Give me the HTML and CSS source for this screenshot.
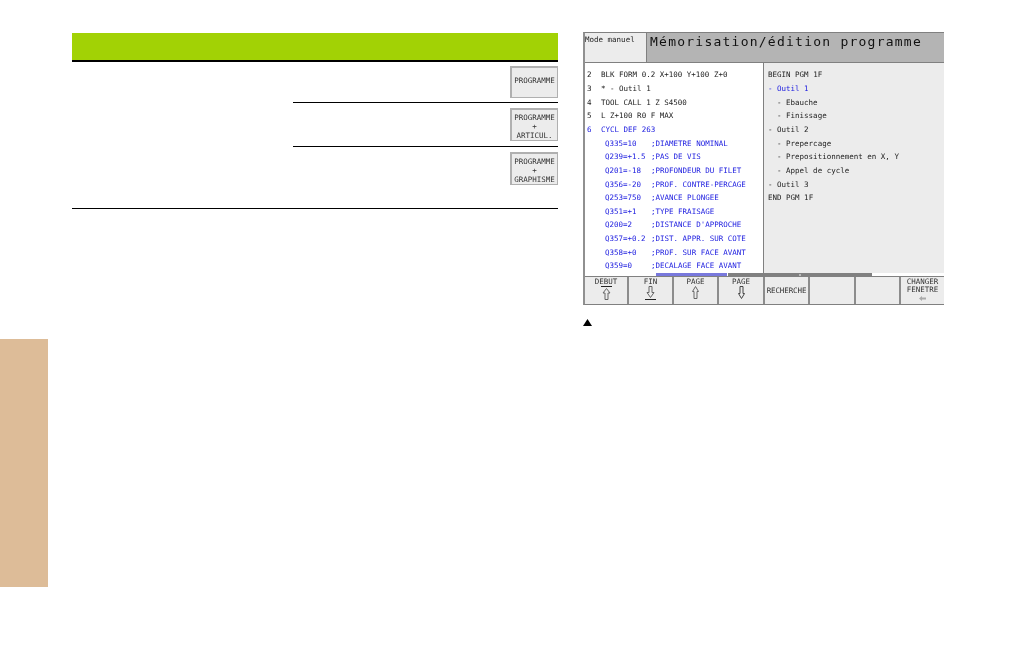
FILE: index.html
```html
<!DOCTYPE html>
<html lang="fr">
<head>
<meta charset="utf-8">
<title>Mémorisation/édition programme</title>
<link rel="stylesheet" href="styles.css">
</head>
<body>
<div class="page">
  <aside class="tab"></aside>
  <main class="table">
    <div class="table-head"></div>
    <div class="table-rows">
      <div class="row row-a"><div class="key">PROGRAMME</div></div>
      <div class="row row-b"><div class="key">PROGRAMME<br>+<br>ARTICUL.</div></div>
      <div class="row row-c"><div class="key">PROGRAMME<br>+<br>GRAPHISME</div></div>
    </div>
  </main>
  <section class="shot">
    <div class="screen">
      <header class="head">
        <div class="mode">Mode manuel</div>
        <div class="title">Mémorisation/édition programme</div>
      </header>
      <div class="panes">
        <div class="code">
          <div class="line"><span class="num">2</span>BLK FORM 0.2 X+100 Y+100 Z+0</div>
          <div class="line"><span class="num">3</span>* - Outil 1</div>
          <div class="line"><span class="num">4</span>TOOL CALL 1 Z S4500</div>
          <div class="line"><span class="num">5</span>L Z+100 R0 F MAX</div>
          <div class="line blue"><span class="num">6</span>CYCL DEF 263</div>
          <div class="line blue param"><span class="q">Q335=10</span>;DIAMETRE NOMINAL</div>
          <div class="line blue param"><span class="q">Q239=+1.5</span>;PAS DE VIS</div>
          <div class="line blue param"><span class="q">Q201=-18</span>;PROFONDEUR DU FILET</div>
          <div class="line blue param"><span class="q">Q356=-20</span>;PROF. CONTRE-PERCAGE</div>
          <div class="line blue param"><span class="q">Q253=750</span>;AVANCE PLONGEE</div>
          <div class="line blue param"><span class="q">Q351=+1</span>;TYPE FRAISAGE</div>
          <div class="line blue param"><span class="q">Q200=2</span>;DISTANCE D'APPROCHE</div>
          <div class="line blue param"><span class="q">Q357=+0.2</span>;DIST. APPR. SUR COTE</div>
          <div class="line blue param"><span class="q">Q358=+0</span>;PROF. SUR FACE AVANT</div>
          <div class="line blue param"><span class="q">Q359=0</span>;DECALAGE FACE AVANT</div>
        </div>
        <div class="tree">
          <div class="line">BEGIN PGM 1F</div>
          <div class="line blue">- Outil 1</div>
          <div class="line sub">- Ebauche</div>
          <div class="line sub">- Finissage</div>
          <div class="line">- Outil 2</div>
          <div class="line sub">- Prepercage</div>
          <div class="line sub">- Prepositionnement en X, Y</div>
          <div class="line sub">- Appel de cycle</div>
          <div class="line">- Outil 3</div>
          <div class="line">END PGM 1F</div>
        </div>
      </div>
      <div class="scroll">
        <div class="scroll-left"><span class="thumb-blue"></span><span class="thumb-end"></span></div>
        <div class="scroll-right"><span class="thumb-grey"><i class="dot"></i></span></div>
      </div>
      <div class="softkeys">
        <div class="soft"><span>DEBUT</span>
          <svg class="arrow" width="11" height="15" viewBox="0 0 11 15"><path d="M0 0.5H11" stroke="#222" fill="none"/><path d="M5.5 2.5L9 7H7V13.5H4V7H2Z" stroke="#666" fill="none"/></svg>
        </div>
        <div class="soft"><span>FIN</span>
          <svg class="arrow" width="11" height="15" viewBox="0 0 11 15"><path d="M0 13.5H11" stroke="#222" fill="none"/><path d="M4 0.5H7V6.5H9L5.5 11.5L2 6.5H4Z" stroke="#666" fill="none"/></svg>
        </div>
        <div class="soft"><span>PAGE</span>
          <svg class="arrow" width="9" height="15" viewBox="0 0 9 15"><path d="M4.5 0.5L7.5 5.5H6V12.5H3V5.5H1.5Z" stroke="#666" fill="none"/></svg>
        </div>
        <div class="soft"><span>PAGE</span>
          <svg class="arrow" width="9" height="15" viewBox="0 0 9 15"><path d="M3 0.5H6V7.5H7.5L4.5 12.5L1.5 7.5H3Z" stroke="#444" fill="none"/></svg>
        </div>
        <div class="soft soft-mid"><span>RECHERCHE</span></div>
        <div class="soft"></div>
        <div class="soft"></div>
        <div class="soft soft-last"><span>CHANGER<br>FENETRE</span>
          <svg class="small-arrow" width="7" height="5" viewBox="0 0 7 5"><path d="M0 2.5L3 0V5ZM3 1.5H7V3.5H3Z" fill="#aaa"/></svg>
        </div>
      </div>
    </div>
    <svg class="triangle" width="9" height="7" viewBox="0 0 9 7"><polygon points="4.5,0 9,7 0,7" fill="#000"/></svg>
  </section>
</div>
</body>
</html>
```
FILE: styles.css
```css
html, body {
  margin: 0;
  padding: 0;
  background: #fff;
}
.page {
  display: flex;
  align-items: flex-start;
  width: 1012px;
  height: 655px;
  overflow: hidden;
  font-family: "DejaVu Sans Mono", "Liberation Mono", monospace;
  will-change: transform;
}
.tab {
  flex: none;
  width: 48px;
  height: 248px;
  margin-top: 339px;
  background: #ddbc98;
}
.table {
  flex: none;
  width: 486px;
  margin: 33px 0 0 24px;
}
.table-head {
  height: 27px;
  background: #a2d205;
  border-bottom: 2px solid #000;
}
.table-rows {
  border-bottom: 1px solid #000;
}
.row {
  display: flex;
  justify-content: flex-end;
  margin-left: 221px;
}
.row-a {
  padding: 4px 0;
  border-bottom: 1px solid #000;
}
.row-b {
  padding: 5px 0;
  border-bottom: 1px solid #000;
}
.row-c {
  padding: 5px 0 23px;
}
.key {
  box-sizing: border-box;
  width: 48px;
  min-height: 33px;
  padding-top: 3px;
  background: #ececec;
  border: 1px solid #b0b0b0;
  border-left-width: 2px;
  border-top-width: 2px;
  color: #333;
  font-size: 7.5px;
  line-height: 9px;
  text-align: center;
  letter-spacing: 0;
}
.row-a .key {
  min-height: 32px;
  line-height: 26px;
  padding-top: 0;
}
.shot {
  flex: none;
  width: 361px;
  margin: 32px 0 0 25px;
}
.screen {
  border-top: 1px solid #808080;
  border-left: 2px solid #909090;
  border-bottom: 1px solid #808080;
  box-sizing: border-box;
  height: 273px;
  display: flex;
  flex-direction: column;
  color: #222;
  font-size: 7.5px;
}
.head {
  flex: none;
  display: flex;
  height: 29px;
  background: #b4b4b4;
}
.mode {
  box-sizing: border-box;
  width: 62px;
  padding: 2px 0 0;
  background: #ececec;
  border-right: 1px solid #808080;
  line-height: 9px;
  letter-spacing: 0;
}
.title {
  padding: 1px 0 0 3px;
  color: #111;
  font-size: 13px;
  line-height: 15px;
  letter-spacing: 1.24px;
  white-space: nowrap;
}
.panes {
  flex: none;
  display: flex;
  height: 211px;
  border-top: 1px solid #808080;
  box-sizing: border-box;
}
.code {
  box-sizing: border-box;
  width: 179px;
  padding: 5.4px 0 0 2px;
  background: #fff;
  border-right: 1px solid #808080;
}
.tree {
  flex: 1;
  padding: 5.4px 0 0 4px;
  background: #ececec;
}
.line {
  height: 13.65px;
  line-height: 13.65px;
  letter-spacing: 0;
  white-space: pre;
}
.blue {
  color: #2020e0;
}
.num {
  display: inline-block;
  width: 14px;
}
.param {
  padding-left: 18px;
}
.q {
  display: inline-block;
  width: 46px;
}
.sub {
  padding-left: 9px;
}
.scroll {
  flex: none;
  display: flex;
  height: 3px;
  background: #fff;
}
.scroll-left {
  display: flex;
  box-sizing: border-box;
  width: 179px;
  padding-left: 71px;
  background: #fff;
}
.thumb-blue {
  width: 71px;
  background: #7878dc;
}
.thumb-end {
  flex: 1;
  margin-left: 1px;
  background: #808080;
}
.scroll-right {
  flex: 1;
}
.thumb-grey {
  display: flex;
  justify-content: center;
  align-items: center;
  width: 108px;
  height: 3px;
  background: #808080;
}
.dot {
  display: block;
  width: 2px;
  height: 2px;
  margin-right: 36px;
  background: #bbb;
}
.softkeys {
  flex: 1;
  display: grid;
  grid-template-columns: 44px 45px 45px 46px 45px 46px 45px 1fr;
  border-top: 1px solid #808080;
  background: #ececec;
}
.soft {
  display: flex;
  flex-direction: column;
  align-items: center;
  padding-top: 1px;
  box-sizing: border-box;
  border-right: 2px solid #8c8c8c;
  color: #333;
  line-height: 8px;
  letter-spacing: 0;
  text-align: center;
}
.soft-mid {
  justify-content: center;
  padding-top: 0;
  letter-spacing: -0.1px;
}
.soft-last {
  border-right: 0;
}
.small-arrow {
  margin-top: 2px;
}
.triangle {
  display: block;
  margin: 14px 0 0 0;
}
```
